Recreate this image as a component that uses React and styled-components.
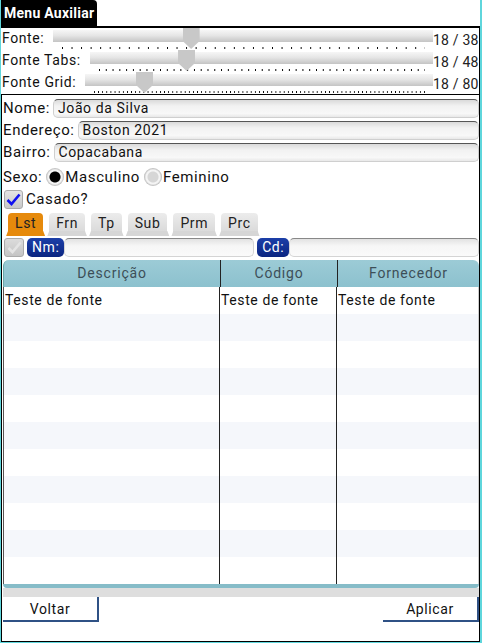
import React from 'react'
import styled, { createGlobalStyle } from 'styled-components';

const Global = createGlobalStyle`
    body{
        margin: 0;
        font-family: Roboto, "Noto Sans", sans-serif;
        background: #fff;
    }
    *{ box-sizing: border-box; }
`

const sliders = [
    { label: 'Fonte:', value: 18, max: 38 },
    { label: 'Fonte Tabs:', value: 18, max: 48 },
    { label: 'Fonte Grid:', value: 18, max: 80 },
]

const fields = [
    { label: 'Nome:', value: 'João da Silva' },
    { label: 'Endereço:', value: 'Boston 2021' },
    { label: 'Bairro:', value: 'Copacabana' },
]

const tabs = ['Lst', 'Frn', 'Tp', 'Sub', 'Prm', 'Prc']
const rows = Array.from({ length: 11 }, (_, i) => i === 0)

const CheckIcon = ({ color }) => (
    <svg width="15" height="13" viewBox="0 0 15 13">
        <path d="M1.5 7 L5.5 11 L13.5 1.5" fill="none" stroke={color} strokeWidth="2.6" strokeLinejoin="miter" />
    </svg>
)

const App = () => {
    return (
        <Frame>
            <Global />
            <Header>
                <MenuTab>Menu Auxiliar</MenuTab>
            </Header>
            <Body>
                <Sliders>
                    {sliders.map(s => (
                        <SliderRow key={s.label}>
                            <SliderLabel>{s.label}</SliderLabel>
                            <TrackWrap>
                                <Track />
                                <Ticks steps={s.max} />
                                <Thumb style={{ left: `calc(${(s.value - 7) / (s.max - 7)} * (100% - 18px) + 1px)` }} />
                            </TrackWrap>
                            <SliderValue>{s.value} / {s.max}</SliderValue>
                        </SliderRow>
                    ))}
                </Sliders>
                <Form>
                    {fields.map(f => (
                        <FieldRow key={f.label}>
                            <Label>{f.label}</Label>
                            <Input>{f.value}</Input>
                        </FieldRow>
                    ))}
                    <RadioRow>
                        <Label>Sexo:</Label>
                        <Radio checked />
                        <Label>Masculino</Label>
                        <Radio />
                        <Label>Feminino</Label>
                    </RadioRow>
                    <CheckRow>
                        <CheckBox><CheckIcon color="#1010f0" /></CheckBox>
                        <Label>Casado?</Label>
                    </CheckRow>
                    <TabBar>
                        {tabs.map((t, i) => <Tab key={t} active={i === 0}>{t}</Tab>)}
                    </TabBar>
                    <FilterRow>
                        <CheckBox disabled small><CheckIcon color="#e4e4e4" /></CheckBox>
                        <Pill>Nm:</Pill>
                        <FilterInput />
                        <Pill>Cd:</Pill>
                        <FilterInput />
                    </FilterRow>
                    <Grid>
                        <GridHead>
                            <HeadCell>Descrição</HeadCell>
                            <HeadCell>Código</HeadCell>
                            <HeadCell>Fornecedor</HeadCell>
                        </GridHead>
                        <GridBody>
                            {rows.map((filled, i) => (
                                <GridRow key={i} striped={i % 2 === 1}>
                                    <Cell>{filled ? 'Teste de fonte' : ''}</Cell>
                                    <Cell>{filled ? 'Teste de fonte' : ''}</Cell>
                                    <Cell>{filled ? 'Teste de fonte' : ''}</Cell>
                                </GridRow>
                            ))}
                        </GridBody>
                        <GridFoot />
                    </Grid>
                    <ScrollStrip />
                    <Buttons>
                        <Button>Voltar</Button>
                        <Button>Aplicar</Button>
                    </Buttons>
                </Form>
            </Body>
        </Frame>
    )
}

const Frame = styled.div`
    width: 482px;
    height: 643px;
    display: flex;
    flex-direction: column;
    border-left: 1px solid #5fd6dc;
    border-right: 2px solid #5fd6dc;
    border-bottom: 2px solid #5fd6dc;
    color: #111;
`
const Header = styled.div`
    height: 29px;
    display: flex;
    align-items: flex-end;
`
const MenuTab = styled.div`
    background: #000;
    color: #fff;
    font-weight: bold;
    font-size: 14px;
    height: 26px;
    line-height: 26px;
    padding: 0 3px 0 3px;
    border-top-right-radius: 4px;
    letter-spacing: 0.25px;
`
const Body = styled.div`
    flex: 1;
    display: flex;
    flex-direction: column;
    border-top: 2px solid #000;
    border-right: 1px solid #000;
    border-bottom: 1px solid #000;
`
const Sliders = styled.div`
    display: flex;
    flex-direction: column;
    padding-left: 1px;
`
const SliderRow = styled.div`
    display: flex;
    height: 22px;
`
const SliderLabel = styled.div`
    font-size: 14px;
    letter-spacing: 0.6px;
    line-height: 16px;
    padding-top: 2px;
    padding-right: 9px;
    white-space: nowrap;
`
const TrackWrap = styled.div`
    flex: 1;
    position: relative;
`
const Track = styled.div`
    margin-top: 2px;
    height: 12px;
    background: linear-gradient(#f6f6f6, #e6e6e6 45%, #c4c4c4);
`
const Ticks = styled.div`
    margin: 5px 8px 0 9px;
    height: 2px;
    background-image: linear-gradient(to right, #000 1px, transparent 1px);
    background-size: ${p => 100 / p.steps}% 100%;
    background-repeat: repeat-x;
`
const Thumb = styled.div`
    position: absolute;
    top: 0;
    width: 17px;
    height: 21px;
    background: #c8c8c8;
    clip-path: polygon(0 0, 100% 0, 100% 62%, 50% 100%, 0 62%);
`
const SliderValue = styled.div`
    flex-shrink: 0;
    width: 46px;
    font-size: 14px;
    letter-spacing: 0.2px;
    line-height: 16px;
    padding-top: 4px;
    color: #222;
    white-space: nowrap;
`
const Form = styled.div`
    flex: 1;
    display: flex;
    flex-direction: column;
    border-top: 1px solid #000;
    border-left: 1px solid #000;
    padding: 2px 0 0 1px;
`
const FieldRow = styled.div`
    display: flex;
    align-items: center;
    height: 22px;
    gap: 3px;
`
const Label = styled.span`
    font-size: 15px;
    letter-spacing: 0.6px;
    white-space: nowrap;
`
const Input = styled.div`
    flex: 1;
    height: 19px;
    border: 1px solid #cfcfcf;
    border-top: 1px solid #555;
    border-radius: 5px;
    background: linear-gradient(#dadada, #f2f2f2 35%, #f8f8f8 80%, #e8e8e8);
    font-size: 14px;
    letter-spacing: 0.6px;
    line-height: 17px;
    padding-left: 4px;
`
const RadioRow = styled.div`
    display: flex;
    align-items: center;
    height: 23px;
    margin-top: 2px;
    gap: 1px;
`
const Radio = styled.div`
    width: 18px;
    height: 18px;
    border-radius: 50%;
    margin-left: 3px;
    background: radial-gradient(circle, ${p => p.checked ? '#000 0, #000 5px' : '#d6d6d6 0, #d6d6d6 5px'}, #f4f4f4 6px, #f4f4f4 7px, #b4b4b4 9px);
`
const CheckRow = styled.div`
    display: flex;
    align-items: center;
    height: 22px;
    gap: 3px;
    padding-left: 1px;
`
const CheckBox = styled.div`
    width: ${p => p.small ? 20 : 19}px;
    height: 19px;
    border-radius: 3px;
    display: flex;
    align-items: center;
    justify-content: center;
    background: ${p => p.disabled ? 'linear-gradient(#dcdcdc, #c4c4c4)' : 'linear-gradient(#e4e4e4, #c8c8c8)'};
    border: 1px solid #aaa;
`
const TabBar = styled.div`
    display: flex;
    gap: 6px;
    height: 26px;
    padding-left: 5px;
    align-items: flex-end;
`
const Tab = styled.div`
    position: relative;
    height: 23px;
    padding: 0 7px;
    border-radius: 4px 4px 0 0;
    font-size: 14px;
    letter-spacing: 0.6px;
    line-height: 21px;
    color: #222;
    background: ${p => p.active ? '#e68a0c' : 'linear-gradient(#ececec, #d6d6d6)'};
    min-width: 30px;
    text-align: center;
    &::after{
        content: '';
        position: absolute;
        left: -3px;
        right: -3px;
        bottom: -3px;
        height: 8px;
        background: ${p => p.active ? '#e68a0c' : '#d6d6d6'};
        clip-path: polygon(0 100%, 3px 0, calc(100% - 3px) 0, 100% 100%);
    }
`
const FilterRow = styled.div`
    display: flex;
    align-items: center;
    height: 21px;
    padding: 1px 0 0 1px;
    position: relative;
    z-index: 1;
    background: #fff;
`
const Pill = styled.div`
    height: 19px;
    margin-left: 3px;
    padding: 0 5px;
    border-radius: 5px;
    background: linear-gradient(#1c3fa8, #0b2580);
    color: #fff;
    font-size: 14px;
    letter-spacing: 0.6px;
    line-height: 19px;
`
const FilterInput = styled.div`
    flex: 1;
    height: 19px;
    border: 1px solid #d4d4d4;
    border-top-color: #888;
    border-radius: 5px;
    background: linear-gradient(#e2e2e2, #f6f6f6 40%, #fafafa);
`
const Grid = styled.div`
    flex: 1;
    display: flex;
    flex-direction: column;
    margin-top: 3px;
`
const GridHead = styled.div`
    display: grid;
    grid-template-columns: 216px 117px 1fr;
    height: 27px;
    border-radius: 6px 6px 0 0;
    background: linear-gradient(#9ccbd6, #8cc1ce);
    border-left: 1px solid #6aa;
`
const HeadCell = styled.div`
    font-size: 14px;
    letter-spacing: 0.8px;
    line-height: 27px;
    text-align: center;
    color: #3d4f58;
    & + &{ border-left: 1px solid #222; }
`
const GridBody = styled.div`
    flex: 1;
    overflow: hidden;
    border-left: 1px solid #555;
    border-right: 1px solid #ccc;
`
const GridRow = styled.div`
    display: grid;
    grid-template-columns: 215px 117px 1fr;
    height: 27px;
    background: ${p => p.striped ? '#f5f7fb' : '#fff'};
`
const Cell = styled.div`
    font-size: 14px;
    letter-spacing: 0.6px;
    line-height: 26px;
    padding-left: 1px;
    white-space: nowrap;
    & + &{ border-left: 1px solid #222; }
`
const GridFoot = styled.div`
    height: 4px;
    border-radius: 0 0 4px 4px;
    background: #86bcc8;
`
const ScrollStrip = styled.div`
    height: 9px;
    background: #dedede;
`
const Buttons = styled.div`
    display: flex;
    justify-content: space-between;
    height: 44px;
`
const Button = styled.div`
    width: 96px;
    height: 25px;
    border-right: 2px solid #2f5185;
    border-bottom: 2px solid #2f5185;
    font-size: 14px;
    letter-spacing: 0.6px;
    line-height: 25px;
    text-align: center;
    color: #111;
`

export default App;
